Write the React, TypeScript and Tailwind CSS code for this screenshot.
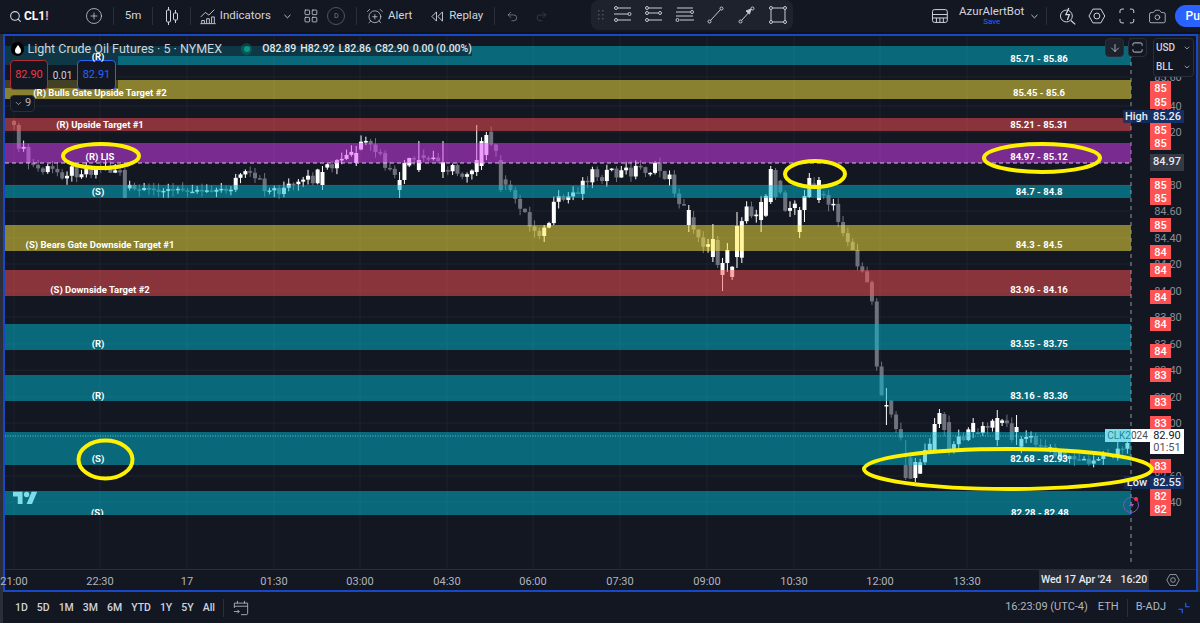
import {
  AlarmClockPlus,
  ArrowDown,
  Camera,
  ChevronDown,
  CirclePlus,
  LayoutGrid,
  Redo2,
  Search,
  Undo2,
} from "lucide-react";

// chart coordinates are page pixels, the plot starts at 5,36
const PLOT_X = 5;
const PLOT_Y = 36;

const bands = [
  { top: 46, bottom: 65, fill: "#00bcd4" },
  { top: 80, bottom: 99, fill: "#ffeb3b" },
  { top: 118, bottom: 131, fill: "#ff5252" },
  { top: 143, bottom: 163, fill: "#e040fb" },
  { top: 185, bottom: 198, fill: "#00bcd4" },
  { top: 225, bottom: 251, fill: "#ffeb3b" },
  { top: 270, bottom: 296, fill: "#ff5252" },
  { top: 324, bottom: 350, fill: "#00bcd4" },
  { top: 375, bottom: 401, fill: "#00bcd4" },
  { top: 432, bottom: 465, fill: "#00bcd4" },
  { top: 491, bottom: 515, fill: "#00bcd4" },
];

const bandLabels = [
  { left: "(R)", right: "85.71 - 85.86", y: 57, ry: 59 },
  { left: "(R) Bulls Gate Upside Target #2", right: "85.45 - 85.6", y: 93, ry: 93 },
  { left: "(R) Upside Target #1", right: "85.21 - 85.31", y: 125, ry: 125 },
  { left: "(R) LIS", right: "84.97 - 85.12", y: 157, ry: 157 },
  { left: "(S)", right: "84.7 - 84.8", y: 192, ry: 192 },
  { left: "(S) Bears Gate Downside Target #1", right: "84.3 - 84.5", y: 245, ry: 245 },
  { left: "(S) Downside Target #2", right: "83.96 - 84.16", y: 290, ry: 290 },
  { left: "(R)", right: "83.55 - 83.75", y: 344, ry: 344 },
  { left: "(R)", right: "83.16 - 83.36", y: 396, ry: 396 },
  { left: "(S)", right: "82.68 - 82.93", y: 459, ry: 459 },
];

const priceTicks = [
  ["85.60", 77],
  ["85.40", 106],
  ["85.20", 132],
  ["84.80", 185],
  ["84.60", 211],
  ["84.40", 238],
  ["84.20", 264],
  ["84.00", 291],
  ["83.80", 317],
  ["83.60", 344],
  ["83.40", 370],
  ["83.20", 397],
  ["83.00", 423],
  ["82.60", 476],
  ["82.40", 502],
] as const;

const badges = [
  ["85", 88],
  ["85", 102],
  ["85", 130],
  ["85", 143],
  ["85", 185],
  ["85", 198],
  ["85", 225],
  ["84", 252],
  ["84", 270],
  ["84", 297],
  ["84", 324],
  ["84", 351],
  ["83", 375],
  ["83", 402],
  ["83", 423],
  ["83", 466],
  ["82", 496],
  ["82", 509],
] as const;

const times = [
  ["21:00", 14],
  ["22:30", 100],
  ["17", 187],
  ["01:30", 274],
  ["03:00", 360],
  ["04:30", 447],
  ["06:00", 533],
  ["07:30", 620],
  ["09:00", 707],
  ["10:30", 794],
  ["12:00", 880],
  ["13:30", 967],
] as const;

// rough path of the close, [x, y]
const path = [
  [14, 132], [22, 150], [30, 165], [40, 170], [60, 172], [80, 170], [100, 168], [120, 170],
  [125, 190], [135, 190], [230, 190], [240, 174], [250, 178], [270, 190], [300, 186], [320, 175],
  [350, 155], [360, 146], [375, 150], [385, 165], [397, 185], [405, 165], [415, 162], [430, 158],
  [445, 165], [460, 175], [475, 165], [485, 136], [495, 150], [505, 190], [520, 203], [530, 226],
  [545, 232], [555, 205], [570, 196], [580, 186], [590, 172], [610, 176], [640, 168], [660, 170],
  [670, 180], [685, 212], [700, 236], [715, 262], [722, 285], [735, 262], [745, 212], [760, 215],
  [770, 172], [785, 205], [800, 212], [810, 182], [825, 196], [840, 222], [850, 242], [860, 272],
  [871, 290], [875, 310], [877, 376], [885, 398], [895, 420], [905, 462], [912, 476], [925, 455],
  [940, 415], [950, 445], [965, 435], [985, 430], [1000, 415], [1015, 440], [1035, 440], [1060, 455],
  [1090, 462], [1110, 455], [1131, 440],
];

// candles worth placing by hand: x, open, close, high, low
const tallCandles = [
  [124, 170, 198, 168, 198], [321, 185, 172, 166, 190], [356, 163, 153, 146, 166], [398, 190, 180, 172, 198],
  [404, 180, 163, 160, 184], [419, 170, 160, 141, 172], [442, 172, 162, 141, 178], [476, 172, 160, 125, 176],
  [485, 155, 135, 132, 160], [500, 160, 190, 155, 192], [688, 225, 210, 205, 232], [712, 257, 239, 224, 262],
  [717, 240, 265, 236, 268], [722, 275, 263, 258, 291], [727, 263, 250, 243, 272], [736, 257, 226, 212, 268],
  [760, 220, 202, 196, 232], [770, 202, 169, 166, 204], [774, 170, 197, 168, 200], [798, 232, 210, 207, 238],
  [803, 210, 196, 190, 222], [808, 197, 178, 173, 198], [818, 200, 180, 177, 203], [886, 406, 405, 388, 425],
  [908, 465, 478, 440, 480], [914, 478, 462, 458, 482], [933, 450, 424, 418, 452], [938, 424, 413, 409, 428],
  [943, 414, 430, 412, 436], [972, 432, 423, 418, 438], [996, 440, 418, 410, 446], [1015, 432, 427, 415, 445],
];

const closeAt = (x: number) => {
  for (let i = 1; i < path.length; i++) {
    if (x <= path[i][0]) {
      const [x0, y0] = path[i - 1];
      const [x1, y1] = path[i];
      return y0 + ((y1 - y0) * (x - x0)) / (x1 - x0);
    }
  }
  return path[path.length - 1][1];
};

const noise = (n: number) => {
  const v = Math.sin(n * 12.9898) * 43758.5453;
  return v - Math.floor(v);
};

const wobble = (x: number, i: number) => {
  const amp = x > 130 && x < 235 ? 4 : x > 1040 ? 8 : 14;
  return closeAt(x) + (noise(i) - 0.5) * amp;
};

const candles = Array.from({ length: 232 }, (_, i) => 14 + i * 4.82).map((x, i, all) => {
  const tall = tallCandles.find((t) => Math.abs(t[0] - x) <= 2.41);
  if (tall) return { x, open: tall[1], close: tall[2], high: tall[3], low: tall[4] };
  const close = wobble(x, i);
  const open = i === 0 ? close - 4 : wobble(all[i - 1], i - 1);
  return {
    x,
    open,
    close,
    high: Math.min(open, close) - noise(i + 300) * 7,
    low: Math.max(open, close) + noise(i + 600) * 7,
  };
});

function Candles() {
  return (
    <g>
      {candles.map((c) => {
        const up = c.close < c.open;
        const color = up ? "#ffffff" : "#6f727c";
        return (
          <g key={c.x}>
            <line x1={c.x} x2={c.x} y1={c.high} y2={c.low} stroke={color} strokeWidth={1} />
            <rect
              x={c.x - 2}
              y={Math.min(c.open, c.close)}
              width={4}
              height={Math.max(Math.abs(c.open - c.close), 1.5)}
              fill={color}
            />
          </g>
        );
      })}
    </g>
  );
}

function ChartSvg() {
  return (
    <svg className="absolute inset-0 h-[533px] w-[1127px]" viewBox="5 36 1127 533">
      {priceTicks.map(([label, y]) => (
        <line key={label} x1={5} x2={1132} y1={y} y2={y} stroke="#1e222d" />
      ))}
      {times.map(([label, x]) => (
        <line key={label} x1={x} x2={x} y1={36} y2={569} stroke="#1e222d" />
      ))}
      <g transform="translate(13 489) scale(0.68)" fill="#ffffff">
        <path d="M14 22H7V11H0V4h14v18zM28 22h-8l7.500-18h8L28 22z" />
        <circle cx="20" cy="8" r="4" />
      </g>
      <Candles />
      {bands.map((b) => (
        <rect key={b.top} x={5} y={b.top} width={1126} height={b.bottom - b.top} fill={b.fill} fillOpacity={0.5} />
      ))}
      <line x1={5} x2={1132} y1={163} y2={163} stroke="#c8cad0" strokeDasharray="4 3" />
      <line x1={5} x2={1132} y1={436} y2={436} stroke="#4fc3d4" strokeDasharray="1 1.500" />
      <line x1={1131} x2={1131} y1={38} y2={566} stroke="#9598a1" strokeDasharray="4 4" />
    </svg>
  );
}

function BandText({ x, y, children }: { x: number; y: number; children: string }) {
  return (
    <div
      className="absolute -translate-x-1/2 -translate-y-1/2 whitespace-nowrap text-[9.5px] leading-none font-bold text-white"
      style={{ left: x - PLOT_X, top: y - PLOT_Y }}
    >
      {children}
    </div>
  );
}

function Legend() {
  return (
    <>
      <div className="absolute top-[6px] left-0 flex h-[14px] w-[467px] items-center bg-[#131722]/60 text-[#d1d4dc]">
        <span className="ml-[6px] flex h-[14px] w-[14px] items-center justify-center rounded-full bg-black">
          <svg viewBox="0 0 10 12" className="h-[9px] w-[8px]" fill="#ffffff">
            <path d="M5 0c1.500 2.500 4 4.500 4 7.500a4 4 0 0 1-8 0C1 4.500 3.500 2.500 5 0z" />
          </svg>
        </span>
        <span className="ml-[3px] w-[217px] text-[12.5px] leading-none whitespace-nowrap">Light Crude Oil Futures · 5 · NYMEX</span>
        <span className="relative ml-[-5px] flex h-[12px] w-[12px] translate-x-[10px] items-center justify-center rounded-full bg-[#089981]/30">
          <span className="h-[6px] w-[6px] rounded-full bg-[#089981]" />
        </span>
        <span className="ml-[20px] flex gap-[4px] whitespace-nowrap text-[10.5px] font-medium text-[#e3e5ea]">
          <span>O82.89</span>
          <span>H82.92</span>
          <span>L82.86</span>
          <span>C82.90</span>
          <span>0.00 (0.00%)</span>
        </span>
      </div>
      <div className="absolute top-[20px] left-0 flex h-[32px] w-[113px] items-start bg-[#131722]/60 pt-[4px] pl-[5px]">
        <span className="flex h-[30px] w-[38px] shrink-0 items-center justify-center rounded border border-[#b22833] bg-[#131722] text-[11px] text-[#f23645]">
          82.90
        </span>
        <span className="flex h-[30px] w-[29px] items-center justify-center text-[10px] text-[#d1d4dc]">0.01</span>
        <span className="flex h-[30px] w-[39px] shrink-0 items-center justify-center rounded border border-[#2962ff] bg-[#131722] text-[11px] text-[#2962ff]">
          82.91
        </span>
      </div>
      <div className="absolute top-[59px] left-[5px] flex h-[17px] w-[25px] items-center justify-center gap-[2px] rounded border border-[#2a2e39] bg-[#131722] text-[11px] text-[#b2b5be]">
        <ChevronDown className="h-[9px] w-[9px]" />9
      </div>
    </>
  );
}

function PriceAxis() {
  return (
    <>
      {priceTicks.map(([label, y]) => (
        <span
          key={label}
          className="absolute left-[1145px] w-[36px] -translate-y-1/2 text-center text-[11px] leading-none text-[#8a8d96]"
          style={{ top: y - PLOT_Y }}
        >
          {label}
        </span>
      ))}
      {badges.map(([label, y], i) => (
        <span
          key={i}
          className="absolute left-[1145px] flex h-[14px] w-[21px] -translate-y-1/2 items-center justify-center bg-[#ff5252] text-[11px] leading-none font-medium text-white"
          style={{ top: y - PLOT_Y }}
        >
          {label}
        </span>
      ))}
      <div className="absolute top-[74px] left-[1118px] flex h-[13px] text-[11px] leading-none font-medium text-[#e8eaf0]">
        <span className="flex w-[27px] items-center justify-center bg-[#132f63]/80">High</span>
        <span className="flex w-[34px] items-center justify-center bg-[#132f63]">85.26</span>
      </div>
      <div className="absolute top-[118px] left-[1145px] flex h-[17px] w-[34px] items-center justify-center bg-[#363a45] text-[11px] font-medium text-[#e8eaf0]">
        84.97
      </div>
      <div className="absolute top-[440px] left-[1119px] flex h-[13px] text-[11px] leading-none font-medium text-[#e8eaf0]">
        <span className="flex w-[26px] items-center justify-center bg-[#132f63]/70">Low</span>
        <span className="flex w-[34px] items-center justify-center bg-[#132f63]">82.55</span>
      </div>
      <div className="absolute top-[393px] left-[1100px] flex h-[13px] w-[45px] items-center justify-center bg-white text-[10px] text-[#4a4d57]">
        CLK2024
        <span className="absolute inset-y-0 left-0 w-[26px] bg-[#00bcd4]/50" />
      </div>
      <div className="absolute top-[393px] left-[1145px] flex h-[25px] w-[34px] flex-col items-center justify-center bg-white text-[11px] leading-[12px] text-[#131722]">
        <span>82.90</span>
        <span className="text-[#50535e]">01:51</span>
      </div>
    </>
  );
}

function Ellipses() {
  return (
    <svg className="pointer-events-none absolute inset-0 h-[554px] w-[1191px]" viewBox="5 36 1191 554">
      <g fill="none" stroke="#fff200" strokeWidth={4}>
        <ellipse cx={101} cy={156} rx={38} ry={12} />
        <ellipse cx={815} cy={174} rx={30} ry={13} />
        <ellipse cx={1042} cy={158} rx={58} ry={14} />
        <ellipse cx={105.500} cy={459.500} rx={27} ry={19} />
        <ellipse cx={1008} cy={469} rx={144} ry={20} />
      </g>
      <circle cx={1131} cy={505} r={7.500} fill="none" stroke="#7b4fd0" strokeWidth={1} />
      <path d="M1133 500l-4 6h3l-2 4 4-6h-3z" fill="#b04fd0" />
      <circle cx={1136} cy={499} r={2} fill="#f23645" />
    </svg>
  );
}

function ToolIcon({ children }: { children: React.ReactNode }) {
  return (
    <svg viewBox="0 0 20 20" className="h-[20px] w-[20px]" fill="none" stroke="#c8cad0" strokeWidth={1}>
      {children}
    </svg>
  );
}

function Divider() {
  return <span className="mx-[1px] block h-[18px] w-px bg-[#2a2e39]" />;
}

function TopBar() {
  return (
    <div className="flex h-[32px] shrink-0 items-center bg-[#131722] text-[11.5px] text-[#d1d4dc]">
      <div className="flex w-[80px] items-center pl-[9px] text-[12px]">
        <Search className="h-[13px] w-[13px]" />
        <span className="ml-[2px] font-bold text-white">CL1<span className="text-[#f7a0a8]">!</span></span>
      </div>
      <div className="flex w-[30px] justify-center">
        <CirclePlus className="h-[18px] w-[18px]" strokeWidth={1} />
      </div>
      <span className="ml-[3px]"><Divider /></span>
      <div className="flex w-[37px] justify-center">5m</div>
      <Divider />
      <div className="flex w-[35px] justify-center">
        <svg viewBox="0 0 20 20" className="h-[20px] w-[20px]" fill="none" stroke="#d1d4dc">
          <path d="M6.500 1v3M6.500 16v3M13.500 4v3M13.500 14v3" />
          <rect x="4.500" y="4" width="4" height="12" rx="1" />
          <rect x="11.500" y="7" width="4" height="7" rx="1" />
        </svg>
      </div>
      <Divider />
      <div className="ml-[7px] flex w-[76px] items-center gap-[3px]">
        <svg viewBox="0 0 20 20" className="h-[18px] w-[18px]" fill="none" stroke="#d1d4dc">
          <path d="M2 11l5-5 4 3 6-6M1.500 18.500h17M3 18v-3h3v3M8.500 18v-5h3v5M14 18v-7h3v7" />
        </svg>
        <span>Indicators</span>
      </div>
      <ChevronDown className="ml-[8px] h-[11px] w-[11px]" />
      <LayoutGrid className="ml-[10px] h-[16px] w-[16px]" strokeWidth={1.2} />
      <span className="ml-[9px] flex h-[18px] w-[18px] items-center justify-center rounded-full border border-[#50535e] text-[7px] text-[#787b86]">
        D
      </span>
      <span className="ml-[10px]"><Divider /></span>
      <AlarmClockPlus className="ml-[8px] h-[18px] w-[18px]" strokeWidth={1} />
      <span className="ml-[4px]">Alert</span>
      <svg viewBox="0 0 14 12" className="ml-[19px] h-[11px] w-[13px]" fill="none" stroke="#d1d4dc">
        <path d="M6 1L1 6l5 5zM12.500 1l-5 5 5 5z" />
      </svg>
      <span className="ml-[5px]">Replay</span>
      <span className="ml-[10px]"><Divider /></span>
      <Undo2 className="ml-[10px] h-[13px] w-[13px] text-[#b2b5be]" strokeWidth={1} />
      <Redo2 className="ml-[16px] h-[13px] w-[13px] text-[#50535e]" strokeWidth={1} />
      <div className="ml-[43px] flex h-[30px] w-[202px] shrink-0 items-center gap-[11px] self-start rounded-lg bg-[#1e222d] pl-[6px]">
        <svg viewBox="0 0 8 12" className="mr-[-3px] h-[12px] w-[8px]" fill="#50535e">
          <path d="M1 1h1.500v1.500H1zM5 1h1.500v1.500H5zM1 5h1.500v1.500H1zM5 5h1.500v1.500H5zM1 9h1.500v1.500H1zM5 9h1.500v1.500H5z" />
        </svg>
        <ToolIcon>
          <circle cx="3" cy="3" r="1.500" /><path d="M4.500 3H18M1 9h14" /><circle cx="16.500" cy="9" r="1.500" />
          <circle cx="3" cy="15" r="1.500" /><path d="M4.500 15H18" />
        </ToolIcon>
        <ToolIcon>
          <circle cx="3" cy="3" r="1.500" /><path d="M4.500 3H18" /><circle cx="3" cy="8" r="1.500" />
          <path d="M4.500 8H14" /><circle cx="16" cy="8" r="1.500" /><circle cx="3" cy="15" r="1.500" /><path d="M4.500 15H18" />
        </ToolIcon>
        <ToolIcon>
          <path d="M2 3h16M1 7h14M1 11h17M5 15h14" /><circle cx="17" cy="7" r="1.500" /><circle cx="2.500" cy="15" r="1.500" />
        </ToolIcon>
        <ToolIcon>
          <circle cx="3.500" cy="16.500" r="1.500" /><path d="M4.500 15.500l10-11" /><circle cx="15.500" cy="3.500" r="1.500" />
        </ToolIcon>
        <ToolIcon>
          <circle cx="3.500" cy="16.500" r="1.500" /><path d="M4.500 15.500l10-11" /><circle cx="15.500" cy="3.500" r="1.500" />
          <path d="M14 4l-1.500 5-3.500-3z" fill="#c8cad0" />
        </ToolIcon>
        <ToolIcon>
          <rect x="3" y="3" width="14" height="14" /><circle cx="3" cy="3" r="1.500" fill="#1e222d" />
          <circle cx="17" cy="3" r="1.500" fill="#1e222d" /><circle cx="3" cy="17" r="1.500" fill="#1e222d" />
          <circle cx="17" cy="17" r="1.500" fill="#1e222d" />
        </ToolIcon>
      </div>
      <svg viewBox="0 0 18 18" className="ml-[138px] h-[18px] w-[18px]" fill="none" stroke="#d1d4dc">
        <rect x="1.500" y="2.500" width="15" height="13" rx="2" /><path d="M1.500 7.500h15M1.500 11h15M5.500 11v4.500M9 11v4.500M12.500 11v4.500" />
      </svg>
      <div className="ml-[11px] flex w-[64px] flex-col items-center leading-none">
        <span>AzurAlertBot</span>
        <span className="text-[8px] text-[#2962ff]">Save</span>
      </div>
      <ChevronDown className="ml-[5px] h-[11px] w-[11px]" />
      <span className="ml-[5px]"><Divider /></span>
      <svg viewBox="0 0 18 18" className="ml-[11px] h-[18px] w-[18px]" fill="none" stroke="#d1d4dc">
        <circle cx="7.500" cy="9" r="6" /><path d="M12 13.500l4.500 4M10 1L7 7.500h3.500L8.500 13" strokeWidth={1.300} />
      </svg>
      <svg viewBox="0 0 18 18" className="ml-[12px] h-[18px] w-[18px]" fill="none" stroke="#d1d4dc">
        <path d="M5 2h8l4 7-4 7H5L1 9z" /><circle cx="9" cy="9" r="3" />
      </svg>
      <svg viewBox="0 0 18 18" className="ml-[12px] h-[18px] w-[18px]" fill="none" stroke="#d1d4dc">
        <path d="M2 6V4a2 2 0 0 1 2-2h2M12 2h2a2 2 0 0 1 2 2v2M16 12v2a2 2 0 0 1-2 2h-2M6 16H4a2 2 0 0 1-2-2v-2" />
      </svg>
      <Camera className="ml-[12px] h-[19px] w-[19px]" strokeWidth={1} />
      <div className="ml-[8px] flex h-[22px] flex-1 items-center rounded-l-full bg-[#2962ff] pl-[11px] text-[12px] font-medium text-white">
        Pu
      </div>
    </div>
  );
}

function BottomBar() {
  const ranges = ["1D", "5D", "1M", "3M", "6M", "YTD", "1Y", "5Y", "All"];
  return (
    <div className="flex h-[31px] shrink-0 items-center bg-[#131722] pl-[12px] text-[11px] text-[#d1d4dc]">
      <div className="flex gap-[9px] text-[10.5px] font-medium">
        {ranges.map((r) => (
          <span key={r}>{r}</span>
        ))}
      </div>
      <span className="mx-[8px] h-[18px] w-px bg-[#2a2e39]" />
      <svg viewBox="0 0 18 18" className="ml-[1px] h-[16px] w-[16px]" fill="none" stroke="#b2b5be">
        <path d="M5 1v3M13 1v3M1.500 9V3.500h15V15a1.500 1.500 0 0 1-1.500 1.500H9M1.500 7h15M1 13h6M5 11l2 2-2 2" />
      </svg>
      <span className="ml-auto text-[#b2b5be]">16:23:09 (UTC-4)</span>
      <span className="ml-[10px] text-[#b2b5be]">ETH</span>
      <span className="mx-[8px] h-[18px] w-px bg-[#2a2e39]" />
      <span className="text-[#b2b5be]">B-ADJ</span>
      <svg viewBox="0 0 14 14" className="mr-[10px] ml-[12px] h-[12px] w-[12px]" fill="none" stroke="#2962ff" strokeWidth={1.300}>
        <path d="M0.500 8.500h4.500v4.500M13.500 5.500H9V1" />
      </svg>
    </div>
  );
}

export default function App() {
  return (
    <div
      className="flex h-[630px] w-[1200px] flex-col overflow-hidden bg-[#2a2e39]"
      style={{ fontFamily: "Roboto, 'Liberation Sans', sans-serif" }}
    >
      <TopBar />
      <div className="flex h-[598px] flex-col">
        <div className="h-[2px] shrink-0 bg-[#0f1219]" />
        <div className="mr-[2px] ml-[3px] flex h-[558px] shrink-0 flex-col border-2 border-[#1848c8] bg-[#131722]">
          <div className="relative h-[533px] shrink-0">
            <ChartSvg />
            <Legend />
            {bandLabels.map((b) => (
              <BandText key={b.right + "l"} x={b.left === "(R)" || b.left === "(S)" ? 98 : 100} y={b.y}>
                {b.left}
              </BandText>
            ))}
            {bandLabels.map((b) => (
              <BandText key={b.right} x={1039} y={b.ry}>
                {b.right}
              </BandText>
            ))}
            <div className="absolute top-[471px] left-[86px] h-[8px] overflow-hidden text-[9.5px] leading-[12px] font-bold text-white">(S)</div>
            <div className="absolute top-[471px] left-[1006px] h-[8px] overflow-hidden text-[9.5px] leading-[12px] font-bold whitespace-nowrap text-white">82.28 - 82.48</div>
            <div className="absolute top-[2px] left-[1100px] flex h-[19px] w-[19px] items-center justify-center rounded border border-[#2a2e39] bg-[#1e222d]">
              <ArrowDown className="h-[12px] w-[12px] text-[#d1d4dc]" strokeWidth={1.500} />
            </div>
            <div className="absolute top-[2px] left-[1123px] flex h-[19px] w-[19px] items-center justify-center rounded border border-[#2a2e39] bg-[#131722]">
              <svg viewBox="0 0 12 12" className="h-[11px] w-[11px]" fill="none" stroke="#d1d4dc">
                <path d="M1 4V2.500A1.500 1.500 0 0 1 2.500 1h7A1.500 1.500 0 0 1 11 2.500V4M11 8v1.500A1.500 1.500 0 0 1 9.500 11h-7A1.500 1.500 0 0 1 1 9.500V8" />
              </svg>
            </div>
            <PriceAxis />
            <div className="absolute top-[2px] left-[1148px] flex h-[39px] w-[41px] flex-col justify-around rounded border border-[#2a2e39] bg-[#131722] pl-[2px] text-[10px] leading-none font-medium text-[#d1d4dc]">
              <span className="flex items-center justify-between pr-[2px]">USD<ChevronDown className="h-[8px] w-[8px]" /></span>
              <span className="flex items-center justify-between pr-[2px]">BLL<ChevronDown className="h-[8px] w-[8px]" /></span>
            </div>
            <Ellipses />
          </div>
          <div className="relative h-[21px] shrink-0 border-t border-[#2a2e39] text-[11px] text-[#b2b5be]">
            {times.map(([label, x]) => (
              <span key={label} className="absolute top-[4px] -translate-x-1/2" style={{ left: x - PLOT_X }}>
                {label}
              </span>
            ))}
            <div className="absolute top-0 left-[1034px] flex h-[20px] w-[110px] items-center justify-center gap-[9px] bg-[#2a2e39] text-[10.5px] font-medium whitespace-nowrap text-[#e8eaf0]">
              <span>Wed 17 Apr '24</span>
              <span>16:20</span>
            </div>
            <svg viewBox="0 0 18 18" className="absolute top-[3px] left-[1161px] h-[14px] w-[14px]" fill="none" stroke="#b2b5be">
              <path d="M5 2h8l4 7-4 7H5L1 9z" /><circle cx="9" cy="9" r="3" />
            </svg>
          </div>
        </div>
        <div className="ml-[3px]">
          <BottomBar />
        </div>
        <div className="flex-1 bg-white" />
      </div>
    </div>
  );
}
